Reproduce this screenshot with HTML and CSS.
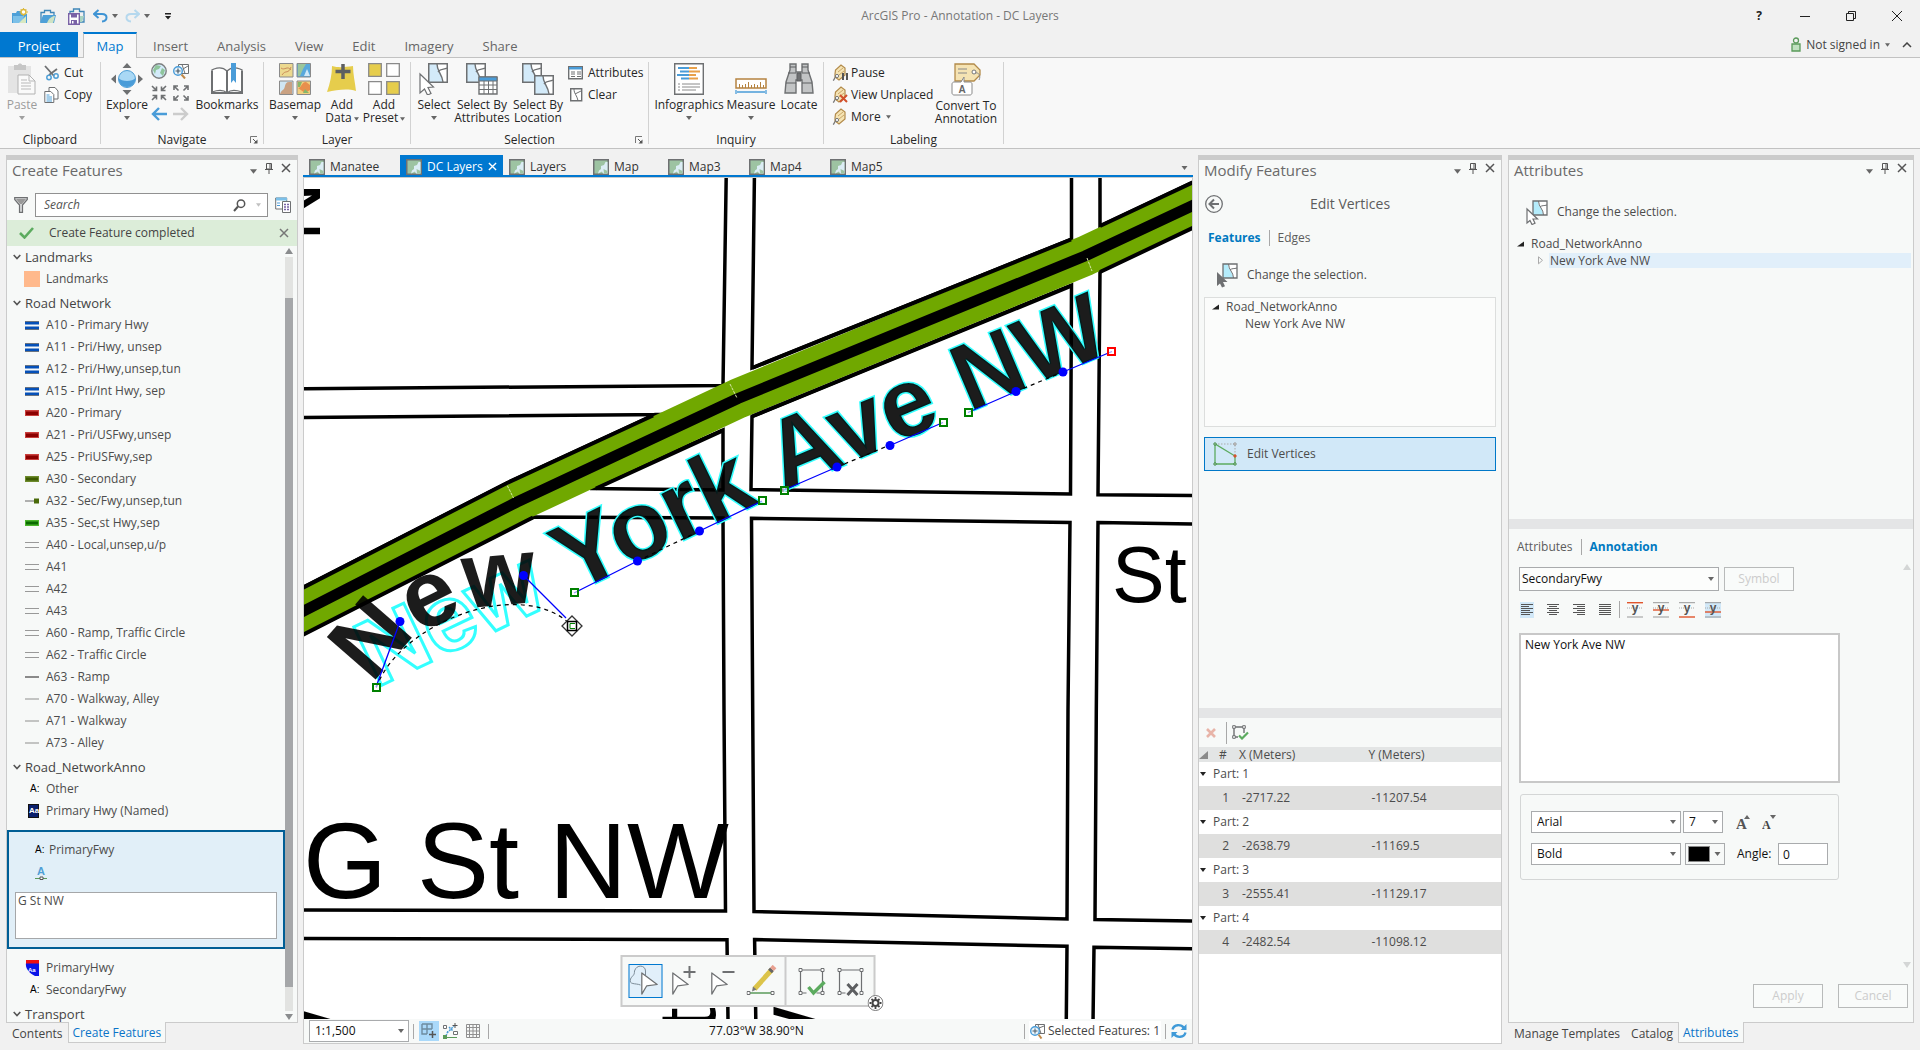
FILE: index.html
```html
<!DOCTYPE html>
<html lang="en">
<head>
<meta charset="utf-8">
<title>ArcGIS Pro - Annotation - DC Layers</title>
<link rel="stylesheet" href="styles.css">
</head>
<body>
<svg class="defs" aria-hidden="true">
  <symbol id="caret" viewBox="0 0 6 4"><path d="M0 0h6L3 4z" fill="#666"/></symbol>
  <symbol id="pin" viewBox="0 0 8 11"><path d="M1.500.5h5v5.500h-5zM5 .5v5M0 6.500h8M4 6.500V11" fill="none" stroke="#555"/></symbol>
  <symbol id="cross" viewBox="0 0 10 10"><path d="M1 1l8 8M9 1L1 9" fill="none" stroke="currentColor" stroke-width="1.500"/></symbol>
  <symbol id="chev" viewBox="0 0 8 6"><path d="M.7 1L4 4.500 7.300 1" fill="none" stroke="#555" stroke-width="1.600"/></symbol>
  <symbol id="launch" viewBox="0 0 8 8"><path d="M.5 7V.5H7" fill="none" stroke="#777"/><path d="M3 3l3 3" stroke="#555"/><path d="M7.500 3.500v4h-4z" fill="#555"/></symbol>
  <symbol id="mapdoc" viewBox="0 0 16 16"><path d="M.75.75h14.500v14.500H.75z" fill="#9dc3a2" stroke="#6e7072" stroke-width="1.500"/><path d="M14.500 3v11.500H10l-1-2-2 1-2 1 1-3 2-1.500V7l3-1 1.500-3z" fill="#dcedf5"/><path d="M10.500 10l4 2v2.500H11z" fill="#9dc3a2"/></symbol>
  <symbol id="expand" viewBox="0 0 7 5"><path d="M7 0v5H0z" fill="#222"/></symbol>
  <symbol id="roadblue" viewBox="0 0 14 9"><path d="M0 0h14v9H0z" fill="#6a7480"/><path d="M0 1h14v3H0zM0 5h14v3H0z" fill="#0550b8"/><path d="M0 3.500h14v2H0z" fill="#f7f9f8"/></symbol>
  <symbol id="roadred" viewBox="0 0 14 6"><path d="M0 0h14v6H0z" fill="#c9403d"/><path d="M1 1.500h12v3.500H1z" fill="#8b0000"/></symbol>
  <symbol id="roadolive" viewBox="0 0 14 6"><path d="M0 0h14v6H0z" fill="#6d8b2c"/><path d="M1 1.500h12v3H1z" fill="#3d5a00"/></symbol>
  <symbol id="roadtun" viewBox="0 0 14 6"><path d="M0 2.500h10v1H0z" fill="#666"/><path d="M9 .5h5v5H9z" fill="#4a6a0a"/></symbol>
  <symbol id="roadgreen" viewBox="0 0 14 6"><path d="M0 0h14v6H0z" fill="#4bb52d"/><path d="M1 1.500h12v3H1z" fill="#0a6a00"/></symbol>
  <symbol id="roadlocal" viewBox="0 0 14 6"><path d="M0 .5h14M0 5.500h14" stroke="#999"/></symbol>
  <symbol id="roadramp" viewBox="0 0 14 6"><path d="M0 3h14" stroke="#8a8a8a" stroke-width="2"/></symbol>
  <symbol id="roadwalk" viewBox="0 0 14 6"><path d="M0 3h14" stroke="#b2b2b2" stroke-width="1.500"/></symbol>
  <symbol id="parcel" viewBox="0 0 20 20"><path d="M.75.75h18.500v18.500H.75z" fill="#fff"/><path d="M1 1h8.500l1 6 2.500 4 2 8H1z" fill="#d3eaf9"/><path d="M9 1c0 8 5 9 6 18M10 9c3-4 6-2 9-4" fill="none" stroke="#6e7072" stroke-width="1.400"/><path d="M.75.75h18.500v18.500H.75z" fill="none" stroke="#6e7072" stroke-width="1.500"/></symbol>
  <symbol id="tag" viewBox="0 0 14 17"><path d="M3 10L3.500 6 9 1l4 3v7l-6 5-4-3z" fill="#f5e3b3" stroke="#b28a4a" stroke-width="1.200"/><path d="M6 8l5-4M7 11l5-4" stroke="#c9a768"/><circle cx="5" cy="12" r="1.600" fill="#fff" stroke="#777"/><path d="M1 16.500c2-1 1-3 3-4" fill="none" stroke="#777" stroke-width="1.200"/></symbol>
  <symbol id="arrowcur" viewBox="0 0 18 26"><path d="M1 1v22l5-8.500L17 13z" fill="#fff" stroke="#6e7072" stroke-width="1.300" stroke-linejoin="round"/></symbol>
  <symbol id="changesel" viewBox="0 0 22 25"><path d="M7 1h14v14H7z" fill="#fff"/><path d="M7 1h5c0 6 5 8 5 14H7z" fill="#b4ecfb"/><path d="M12.500 1c0 6 5 8 5 14M14 7c2-2 4-1 7-2" fill="none" stroke="#6e7072"/><path d="M7 1h14v14H7z" fill="none" stroke="#6e7072" stroke-width="1.300"/></symbol>
</svg>

<header class="titlebar">
  <div class="quick">
    <button class="qbtn" aria-label="New project"><svg width="16" height="16" viewBox="0 0 16 16"><path d="M0 5h4l1-2h4v3h6v9H0z" fill="#4ea0d8"/><path d="M1 8h11l-2 7H1z" fill="#7cc0e8"/><path d="M7 15l7-7v7z" fill="#d8e8c0"/><circle cx="11.500" cy="4" r="2.500" fill="#fff" stroke="#dcb93c" stroke-width="1.500"/><path d="M11.500 0v1M11.500 7v1M7.500 4h1M15 4h1M8.700 1.200l.8.800M14.300 1.200l-.8.800" stroke="#dcb93c"/></svg></button>
    <button class="qbtn" aria-label="Open project"><svg width="16" height="16" viewBox="0 0 16 16"><path d="M1 14V4.500h3.500V2.500h6v2H14V7" fill="none" stroke="#3f86b8" stroke-width="1.300"/><path d="M0 15l3-8h13l-2 8z" fill="#4ea0d8"/><path d="M7 15c2-5 5-7 8-7l-2 7z" fill="#cfe3c4"/></svg></button>
    <button class="qbtn qsave" aria-label="Save project"><svg width="17" height="17" viewBox="0 0 17 17"><path d="M2 5V3.500h3.500V1h6v2.500H16V14h-4" fill="none" stroke="#3f86b8" stroke-width="1.300"/><path d="M12 8h4l-2 6h-2z" fill="#a8d3c0"/><path d="M.7 5.700h10.600v10.600H.7z" fill="#fff" stroke="#7a62a6" stroke-width="1.400"/><path d="M3 6h6v3.500H3zM3 12h6v4H3z" fill="#7a62a6"/><path d="M4 13h1.500v2.500H4z" fill="#fff"/></svg></button>
    <button class="qbtn qarrow" aria-label="Undo"><svg width="15" height="14" viewBox="0 0 15 14"><path d="M5.500 1L1 5l4.500 4M1.500 5H9c6 0 6 7 0 7.500" fill="none" stroke="#3f94d4" stroke-width="2"/></svg></button>
    <svg class="qcaret" width="6" height="4"><use href="#caret"/></svg>
    <button class="qbtn qarrow" aria-label="Redo"><svg width="15" height="14" viewBox="0 0 15 14"><path d="M9.500 1L14 5 9.500 9M13.500 5H6c-6 0-6 7 0 7.500" fill="none" stroke="#b5d8ee" stroke-width="2"/></svg></button>
    <svg class="qcaret" width="6" height="4"><use href="#caret"/></svg>
    <svg class="qmore" width="6" height="7" viewBox="0 0 6 7"><path d="M0 0h6v1.500H0zM0 3h6L3 6.500z" fill="#222"/></svg>
  </div>
  <h1 class="apptitle">ArcGIS Pro - Annotation - DC Layers</h1>
  <div class="winbtns">
    <button aria-label="Help"><b>?</b></button>
    <button aria-label="Minimize"><svg width="10" height="10"><path d="M0 5.500h10" stroke="#222"/></svg></button>
    <button aria-label="Restore"><svg width="10" height="10"><path d="M.5 2.500h7v7h-7zM2.500 2.500v-2h7v7h-2" fill="none" stroke="#222"/></svg></button>
    <button aria-label="Close"><svg width="10" height="10"><path d="M0 0l10 10M10 0L0 10" stroke="#222"/></svg></button>
  </div>
</header>

<nav class="ribtabs">
  <a href="#" class="rt project">Project</a>
  <a href="#" class="rt current">Map</a>
  <a href="#" class="rt">Insert</a>
  <a href="#" class="rt">Analysis</a>
  <a href="#" class="rt">View</a>
  <a href="#" class="rt">Edit</a>
  <a href="#" class="rt">Imagery</a>
  <a href="#" class="rt">Share</a>
  <button class="signin"><svg width="10" height="15" viewBox="0 0 10 15"><circle cx="5" cy="3.500" r="2.500" fill="none" stroke="#5a9a5a" stroke-width="1.300"/><path d="M1 14V7h8v7z" fill="#bfe0bf" stroke="#5a9a5a" stroke-width="1.300"/></svg>Not signed in <svg width="5" height="4"><use href="#caret"/></svg></button>
  <button class="collapse" aria-label="Collapse ribbon"><svg width="10" height="6"><path d="M1 5l4-4 4 4" fill="none" stroke="#444" stroke-width="1.500"/></svg></button>
</nav>

<section class="ribbon">
  <div class="grp g-clip">
    <div class="tools">
      <button class="big w44 off"><svg width="30" height="32" viewBox="0 0 30 32"><path d="M1 3h23v27H1z" fill="#e4e4e4"/><path d="M7 2h4c0-2 4-2 4 0h4v5H7z" fill="#c6c6c6"/><path d="M11 12h11l6 6v13H11z" fill="#fafafa" stroke="#b2b2b2"/><path d="M22 12v6h6M14 17h6M14 20h10M14 23h10M14 26h10" fill="none" stroke="#b8b8b8"/></svg><span>Paste</span><svg width="6" height="4"><use href="#caret"/></svg></button>
      <div class="stack">
        <button class="small"><svg width="15" height="16" viewBox="0 0 15 16"><path d="M1 1l9 10M5 10L13 4" stroke="#6e7072" stroke-width="1.800"/><circle cx="5" cy="12.500" r="2.200" fill="none" stroke="#4f9fd6" stroke-width="1.500"/><circle cx="12" cy="11" r="2.200" fill="none" stroke="#4f9fd6" stroke-width="1.500"/></svg>Cut</button>
        <button class="small"><svg width="15" height="16" viewBox="0 0 15 16"><path d="M5 .5h6L14 4v8H5z" fill="#fff" stroke="#6e7072"/><path d="M.8 4.500h6l3 3v8h-9z" fill="#fff" stroke="#6e7072"/><path d="M2.500 8h3M2.500 10h5.500M2.500 12h5.500M2.500 14h5.500" stroke="#4f9fd6"/></svg>Copy</button>
      </div>
    </div>
    <div class="glabel">Clipboard</div>
  </div>
  <div class="grp g-nav">
    <div class="tools">
      <button class="big w48"><svg width="32" height="32" viewBox="0 0 32 32"><path d="M16 0l4.500 5h-9zM16 32l4.500-5h-9zM0 16l5-4.500v9zM32 16l-5-4.500v9z" fill="#6e7072"/><circle cx="16" cy="16" r="8.500" fill="#a9d8f5" stroke="#4f9fd6"/><path d="M7.500 15c3 4 14 4 17 0 0 12-17 12-17 0z" fill="#4a9cd8"/></svg><span>Explore</span><svg width="6" height="4"><use href="#caret"/></svg></button>
      <div class="navgrid">
        <button aria-label="Full extent"><svg width="16" height="16"><circle cx="8" cy="8" r="7.200" fill="#d3eaf9" stroke="#7d7f80" stroke-width="1.400"/><path d="M5 2l5 1-2 3-3 1-1 4-2-4zM11 5l3 2-2 6-3-3z" fill="#8fc59c"/></svg></button>
        <button aria-label="Zoom to selection"><svg width="16" height="16"><path d="M5.500 1.500h10v9h-10z" fill="#fff" stroke="#6e7072"/><path d="M9 1.500l3 9M10 6l5-3" stroke="#6e7072"/><circle cx="5" cy="8" r="4.300" fill="#e8f4fc" stroke="#4a9cd8" stroke-width="1.400"/><path d="M2.500 8h5M5 5.500v5" stroke="#4a5a66" stroke-width="1.200"/><path d="M8.500 11.500l3.500 4" stroke="#c08a4a" stroke-width="2"/></svg></button>
        <button aria-label="Fixed zoom in"><svg width="16" height="16" fill="none" stroke="#6e7072" stroke-width="1.600"><path d="M1 1l4.500 4.500M5.500 1.500v4h-4M15 1l-4.500 4.500M10.500 1.500v4h4M1 15l4.500-4.500M5.500 14.500v-4h-4M15 15l-4.500-4.500M10.500 14.500v-4h4"/></svg></button>
        <button aria-label="Fixed zoom out"><svg width="16" height="16" fill="none" stroke="#6e7072" stroke-width="1.600"><path d="M1 1l4.500 4.500M1 5V1h4M15 1l-4.500 4.500M15 5V1h-4M1 15l4.500-4.500M1 11v4h4M15 15l-4.500-4.500M15 11v4h-4"/></svg></button>
        <button aria-label="Previous extent"><svg width="16" height="14"><path d="M8 1L2 7l6 6M2 7h14" fill="none" stroke="#4a9cd8" stroke-width="2.400"/></svg></button>
        <button aria-label="Next extent"><svg width="16" height="14"><path d="M8 1l6 6-6 6M14 7H0" fill="none" stroke="#ccc" stroke-width="2.400"/></svg></button>
      </div>
      <button class="big w68 marks"><svg width="32" height="32" viewBox="0 0 32 32"><path d="M1 29V7l2-1C8 4 13 5 16 8c3-3 8-4 13-2l2 1v22c-6-2-12-2-15 1-3-3-9-3-15-1z" fill="#fff" stroke="#6e7072" stroke-width="1.300"/><path d="M1 8v22h30V8M16 8v21" fill="none" stroke="#6e7072" stroke-width="2"/><path d="M20 0h5v20l-2.500-3L20 20z" fill="#4a9cd8"/></svg><span>Bookmarks</span><svg width="6" height="4"><use href="#caret"/></svg></button>
    </div>
    <div class="glabel">Navigate<svg class="launch" width="8" height="8"><use href="#launch"/></svg></div>
  </div>
  <div class="grp g-layer">
    <div class="tools">
      <button class="big w54"><svg width="32" height="32" viewBox="0 0 32 32"><g stroke="#8a8a8a"><path d="M.5.5h13.500v13.500H.5z" fill="#ecd98f"/><path d="M18 .5h13.500v13.500H18z" fill="#58a8dc"/><path d="M.5 18h13.500v13.500H.5z" fill="#cfe6f3"/><path d="M18 18h13.500v13.500H18z" fill="#f2cf7f"/></g><path d="M2 5c4 3 6-3 10 2M3 12c4-6 6 0 9-8" fill="none" stroke="#c98c5a"/><path d="M19 1h8l-3 5-3 7h-2z" fill="#9ac69b"/><path d="M28 6l3 7h-6z" fill="#cfe8f8"/><path d="M1 31c2-5 4-3 5-8s4-4 7-4v12z" fill="#c9a182"/><path d="M19 25c4 0 3-6 8-6l4 3v5l-5 3z" fill="#e88f4d"/><path d="M19 19h4l-2 5h-2zM26 26l4 4h-6z" fill="#87b86b"/></svg><span>Basemap</span><svg width="6" height="4"><use href="#caret"/></svg></button>
      <button class="big w40"><svg width="30" height="32" viewBox="0 0 30 32"><path d="M5 3c7 2 13 1 21 0 0 8 2 16 3 25-9-3-19-1-29 1C3 20 5 12 5 3z" fill="#e6cd4c"/><path d="M16 1v15M8.500 8.500h15" stroke="#5d5f61" stroke-width="3.500"/></svg><span>Add<br>Data<svg width="5" height="4"><use href="#caret"/></svg></span></button>
      <button class="big w44"><svg width="32" height="32" viewBox="0 0 32 32"><path d="M.7.7h12.600v12.600H.7zM18.700 18.700h12.600v12.600H18.700z" fill="#e6cd4c" stroke="#8a8a8a" stroke-width="1.300"/><path d="M18.700.7h12.600v12.600H18.700zM.7 18.700h12.600v12.600H.7z" fill="#fff" stroke="#8a8a8a" stroke-width="1.300"/></svg><span>Add<br>Preset<svg width="5" height="4"><use href="#caret"/></svg></span></button>
    </div>
    <div class="glabel">Layer</div>
  </div>
  <div class="grp g-sel">
    <div class="tools">
      <button class="big w40"><svg width="30" height="32" viewBox="0 0 30 32"><svg x="9" y="0" width="20" height="20"><use href="#parcel"/></svg><path d="M1 11v19l4.500-4 3 6 3.500-1.500-3-6 5.500-.5z" fill="#fff" stroke="#6e7072" stroke-width="1.200"/></svg><span>Select</span><svg width="6" height="4"><use href="#caret"/></svg></button>
      <button class="big w56"><svg width="32" height="32" viewBox="0 0 32 32"><svg x="0" y="0" width="20" height="20"><use href="#parcel"/></svg><path d="M13 14h18v17H13z" fill="#fff" stroke="#6e7072" stroke-width="1.400"/><path d="M13 14h18v4H13z" fill="#4a9cd8" stroke="#6e7072"/><path d="M13 22h18M13 26.500h18M18 18v13M22.500 18v13M27 18v13" stroke="#6e7072"/></svg><span>Select By<br>Attributes</span></button>
      <button class="big w56"><svg width="32" height="32" viewBox="0 0 32 32"><svg x="0" y="0" width="20" height="20"><use href="#parcel"/></svg><svg x="12" y="12" width="20" height="20"><use href="#parcel"/></svg></svg><span>Select By<br>Location</span></button>
      <div class="stack">
        <button class="small"><svg width="15" height="14"><path d="M.7.700h13.600v12H.7z" fill="#fff" stroke="#6e7072" stroke-width="1.400"/><path d="M1 1h13v2.500H1z" fill="#4a9cd8"/><path d="M3 6h4M9 6h4M3 8h4M9 8h4M3 10.500h4M9 10.500h4" stroke="#6e7072"/></svg>Attributes</button>
        <button class="small"><svg width="15" height="14"><path d="M2.700.700h11v12h-11z" fill="#fff" stroke="#6e7072" stroke-width="1.400"/><path d="M6 1c0 5 3 6 4 12M7 6l6-3" fill="none" stroke="#6e7072"/></svg>Clear</button>
      </div>
    </div>
    <div class="glabel">Selection<svg class="launch" width="8" height="8"><use href="#launch"/></svg></div>
  </div>
  <div class="grp g-inq">
    <div class="tools">
      <button class="big w68"><svg width="30" height="32" viewBox="0 0 30 32"><path d="M.7.700h28.600v30.600H.7z" fill="#fff" stroke="#6e7072" stroke-width="1.400"/><path d="M4 5h11M6 8.500h9M3 12h12M7 15.500h8" stroke="#4a9cd8" stroke-width="2"/><path d="M15 5h8M15 8.500h11M15 12h7M15 15.500h9" stroke="#e8a04a" stroke-width="2"/><path d="M4 21h2M8 21h18M4 24h2M8 24h18M4 27h2M8 27h14" stroke="#8a8a8a"/></svg><span>Infographics</span><svg width="6" height="4"><use href="#caret"/></svg></button>
      <button class="big w52"><svg width="32" height="32" viewBox="0 0 32 32"><path d="M1 16h30v9H1z" fill="#fff" stroke="#b58340" stroke-width="1.500"/><path d="M4.500 25v-4M7.500 25v-3M10.500 25v-4M13.500 25v-6M16.500 25v-3M19.500 25v-4M22.500 25v-3M25.500 25v-6M28.500 25v-3" stroke="#b58340"/><path d="M1 27v4M31 27v4M2 29h28" stroke="#4a9cd8" stroke-width="1.300"/></svg><span>Measure</span><svg width="6" height="4"><use href="#caret"/></svg></button>
      <button class="big w40"><svg width="30" height="32" viewBox="0 0 30 32"><path d="M6 1h6v8h6V1h6v6l4 12 1 11H18V17h-6v13H1l1-11L6 7z" fill="#c2c4c5" stroke="#6e7072" stroke-width="1.400"/><path d="M6 4h6M18 4h6M4 10h8M18 10h8M2 20h10M18 20h10M13 10h4v8h-4z" stroke="#5d5f61" fill="#6e7072"/></svg><span>Locate</span></button>
    </div>
    <div class="glabel">Inquiry</div>
  </div>
  <div class="grp g-lab">
    <div class="tools">
      <div class="stack">
        <button class="small"><svg width="17" height="17"><svg width="14" height="17"><use href="#tag"/></svg><path d="M11 9v7M15 9v7" stroke="#555" stroke-width="2"/></svg>Pause</button>
        <button class="small"><svg width="17" height="17"><svg width="14" height="17"><use href="#tag"/></svg><path d="M8 9l7 7M15 9l-7 7" stroke="#d1502a" stroke-width="2"/></svg>View Unplaced</button>
        <button class="small"><svg width="17" height="17"><svg width="14" height="17"><use href="#tag"/></svg></svg>More&nbsp;<svg width="5" height="4"><use href="#caret"/></svg></button>
      </div>
      <button class="big w68"><svg width="30" height="33" viewBox="0 0 30 33"><path d="M4 1h19l6 6v5l-6 6H4z" fill="#f5e3b3" stroke="#b28a4a" stroke-width="1.300"/><circle cx="23" cy="9" r="2" fill="#fff" stroke="#777"/><path d="M24 10c4-1 6 3 4 7M7 6h9M7 10h9" fill="none" stroke="#888"/><path d="M3 19h7l3-5v5h6c1 0 2 1 2 2v9c0 1-1 2-2 2H3c-1 0-2-1-2-2v-9c0-1 1-2 2-2z" fill="#fff" stroke="#8a8a8a"/><text x="11" y="30" text-anchor="middle" class="icoA">A</text></svg><span>Convert To<br>Annotation</span></button>
    </div>
    <div class="glabel">Labeling</div>
  </div>
</section>

<main class="dock">
  <!-- Create Features pane -->
  <aside class="col">
    <section class="pane">
      <header class="phead"><h2>Create Features</h2><svg width="7" height="5"><use href="#caret"/></svg><svg width="8" height="11"><use href="#pin"/></svg><svg width="10" height="10"><use href="#cross"/></svg></header>
      <div class="searchrow">
        <svg width="14" height="16" viewBox="0 0 14 16"><path d="M.7.700h12.600v1.800L8.500 8v7.300h-3V8L.7 2.500z" fill="#d8dadb" stroke="#6e7072" stroke-width="1.200"/><path d="M2 2h10L8 7H6z" fill="#999"/></svg>
        <label class="searchbox"><input type="text" placeholder="Search" aria-label="Search"><svg width="13" height="13" viewBox="0 0 13 13"><circle cx="8" cy="4.700" r="3.700" fill="none" stroke="#555" stroke-width="1.500"/><path d="M5 7.500L1 12" stroke="#555" stroke-width="2"/></svg><svg class="dim" width="5" height="4"><use href="#caret"/></svg></label>
        <svg width="16" height="16" viewBox="0 0 16 16"><path d="M.7 1h11v11H.7z" fill="#fff" stroke="#6e7072"/><path d="M1 .5h11v3H1z" fill="#7cc0e8"/><path d="M2 6h3M2 8.500h3" stroke="#4a9cd8"/><path d="M7.500 4.500h8v11h-8z" fill="#fff" stroke="#6e7072"/><path d="M9 7.500h2M9 10h2M9 12.500h2M12 7.500h2M12 10h2M12 12.500h2" stroke="#7a62a6" stroke-width="1.300"/></svg>
      </div>
      <div class="notice"><svg width="15" height="12" viewBox="0 0 15 12"><path d="M1 6l4.500 4.500L14 1" fill="none" stroke="#5cab5f" stroke-width="2.600"/></svg><span>Create Feature completed</span><svg width="10" height="10"><use href="#cross"/></svg></div>
      <div class="listwrap">
        <ul class="templates">
          <li class="head"><svg width="8" height="6"><use href="#chev"/></svg>Landmarks</li>
          <li><i class="sw"></i>Landmarks</li>
          <li class="head"><svg width="8" height="6"><use href="#chev"/></svg>Road Network</li>
          <li><svg width="14" height="9"><use href="#roadblue"/></svg>A10 - Primary Hwy</li>
          <li><svg width="14" height="9"><use href="#roadblue"/></svg>A11 - Pri/Hwy, unsep</li>
          <li><svg width="14" height="9"><use href="#roadblue"/></svg>A12 - Pri/Hwy,unsep,tun</li>
          <li><svg width="14" height="9"><use href="#roadblue"/></svg>A15 - Pri/Int Hwy, sep</li>
          <li><svg width="14" height="6"><use href="#roadred"/></svg>A20 - Primary</li>
          <li><svg width="14" height="6"><use href="#roadred"/></svg>A21 - Pri/USFwy,unsep</li>
          <li><svg width="14" height="6"><use href="#roadred"/></svg>A25 - PriUSFwy,sep</li>
          <li><svg width="14" height="6"><use href="#roadolive"/></svg>A30 - Secondary</li>
          <li><svg width="14" height="6"><use href="#roadtun"/></svg>A32 - Sec/Fwy,unsep,tun</li>
          <li><svg width="14" height="6"><use href="#roadgreen"/></svg>A35 - Sec,st Hwy,sep</li>
          <li><svg width="14" height="6"><use href="#roadlocal"/></svg>A40 - Local,unsep,u/p</li>
          <li><svg width="14" height="6"><use href="#roadlocal"/></svg>A41</li>
          <li><svg width="14" height="6"><use href="#roadlocal"/></svg>A42</li>
          <li><svg width="14" height="6"><use href="#roadlocal"/></svg>A43</li>
          <li><svg width="14" height="6"><use href="#roadlocal"/></svg>A60 - Ramp, Traffic Circle</li>
          <li><svg width="14" height="6"><use href="#roadlocal"/></svg>A62 - Traffic Circle</li>
          <li><svg width="14" height="6"><use href="#roadramp"/></svg>A63 - Ramp</li>
          <li><svg width="14" height="6"><use href="#roadwalk"/></svg>A70 - Walkway, Alley</li>
          <li><svg width="14" height="6"><use href="#roadwalk"/></svg>A71 - Walkway</li>
          <li><svg width="14" height="6"><use href="#roadwalk"/></svg>A73 - Alley</li>
          <li class="head"><svg width="8" height="6"><use href="#chev"/></svg>Road_NetworkAnno</li>
          <li><span class="aa">A:</span>Other</li>
          <li><span class="aa navy">Aa</span>Primary Hwy (Named)</li>
          <li class="active">
            <div class="acthead"><span class="aa">A:</span>PrimaryFwy</div>
            <button class="straight" aria-label="Straight annotation"><svg width="12" height="14" viewBox="0 0 12 14"><text x="6" y="9" text-anchor="middle" class="icoBlue">A</text><path d="M0 12.500h12" stroke="#5a9a5a"/><path d="M5 11h3v2.500H5z" fill="#fff" stroke="#555"/></svg></button>
            <textarea aria-label="Annotation text">G St NW</textarea>
          </li>
          <li><svg width="14" height="16" viewBox="0 0 14 16"><path d="M1 0h13v16h-4C4 13 0 8 1 3z" fill="#0a14e8"/><path d="M1 0h13v3.500H1z" fill="#f01010"/><text x="3" y="12" class="icoW">Aa</text></svg>PrimaryHwy</li>
          <li><span class="aa">A:</span>SecondaryFwy</li>
          <li class="head"><svg width="8" height="6"><use href="#chev"/></svg>Transport</li>
        </ul>
        <div class="sbar"><svg width="8" height="6"><path d="M4 0l4 6H0z" fill="#8a8c8e"/></svg><div class="track"><div class="thumb"></div></div><svg width="8" height="6"><path d="M0 0h8L4 6z" fill="#8a8c8e"/></svg></div>
      </div>
    </section>
    <nav class="ptabs"><a href="#">Contents</a><a href="#" class="on">Create Features</a></nav>
  </aside>

  <!-- Map view -->
  <section class="mapcol">
    <nav class="mtabs">
      <a href="#" class="m1"><svg width="16" height="16"><use href="#mapdoc"/></svg>Manatee</a>
      <a href="#" class="m2 on"><svg width="16" height="16"><use href="#mapdoc"/></svg>DC Layers<svg class="x" width="9" height="9" viewBox="0 0 10 10"><use href="#cross"/></svg></a>
      <a href="#" class="m3"><svg width="16" height="16"><use href="#mapdoc"/></svg>Layers</a>
      <a href="#" class="m4"><svg width="16" height="16"><use href="#mapdoc"/></svg>Map</a>
      <a href="#" class="m5"><svg width="16" height="16"><use href="#mapdoc"/></svg>Map3</a>
      <a href="#" class="m5"><svg width="16" height="16"><use href="#mapdoc"/></svg>Map4</a>
      <a href="#" class="m5"><svg width="16" height="16"><use href="#mapdoc"/></svg>Map5</a>
      <svg class="mmore" width="7" height="4"><use href="#caret"/></svg>
    </nav>
    <div class="mapframe">
      <div class="canvas">
        <svg class="map" role="img" aria-label="Street map">
          <g transform="translate(-304 -178)">
            <!-- city blocks -->
            <g fill="#fff" stroke="#000" stroke-width="3.500">
              <path d="M726.300 170L723 385.500 290 388.800V170z"/>
              <path d="M290 417.500L668 414.500 655 414.500 507 483 290 594z"/>
              <path d="M754.500 170L752 368 1071.500 239V170z"/>
              <path d="M1100 170V226L1200 179V170z"/>
              <path d="M290 641L527 520 533 517 723 518 724 710 725.500 911 290 910z"/>
              <path d="M590 488.600L723 490V430z"/>
              <path d="M752 416.500L1071.500 285 1070.500 494 751 489.500z"/>
              <path d="M1100 271.400L1200 224V495.700L1098 494.700z"/>
              <path d="M751.500 518.300L1070 522.500 1068 710 1067 919 754 911.500 752.700 710z"/>
              <path d="M1098 522.500L1200 524V921L1095 919.500 1096.300 710z"/>
              <path d="M290 938.500L727 939.700 729 1100H290z"/>
              <path d="M754.600 939.500L1067 946.300 1065.500 1100H757z"/>
              <path d="M1094 947.300L1200 949V1100H1092z"/>
            </g>
            <!-- New York Ave -->
            <g fill="none" stroke-linejoin="round">
              <path d="M290 618L517 502 738 398.500 1085 256 1210 197.500" stroke="#70a800" stroke-width="40"/>
              <path d="M290 618L517 502 738 398.500 1085 256 1210 197.500" stroke="#000" stroke-width="11"/>
              <path d="M505.500 482L513.500 498M730 384L737 398M1087 258L1092 271" stroke="#d6e8a8" stroke-dasharray="3 1"/>
            </g>
            <!-- curb line of New York Ave along each block -->
            <g fill="none" stroke="#000" stroke-width="4">
              <path d="M290 594.500L507 483 653 415.500M752 368L1071 239.500M1100 226L1200 179"/>
              <path d="M290 641.500L527 520.500 533 517.500M596 488.500L723 430.500M752 416.500L1071 286M1100 272L1200 224.500"/>
            </g>
            <!-- street names -->
            <g class="street">
              <text x="303" y="898" font-size="108">G St NW</text>
              <text x="1112" y="602" font-size="79">St</text>
              <text transform="translate(320 241) rotate(-90)" font-size="81">N</text>
              <text transform="translate(715 1084) rotate(-90)" font-size="81">St</text>
              <text transform="translate(830 1083) rotate(-90)" font-size="81">W</text>
              <text transform="translate(345 1083) rotate(-90)" font-size="81">W</text>
            </g>
            <!-- annotation being edited -->
            <path id="curve" d="M376.300 687.500C400.300 621.500 523.500 575.500 572 626" fill="none"/>
            <g class="anno">
              <text class="ghost" transform="translate(376 688) rotate(-25.500)">New</text>
              <text class="plain"><textPath href="#curve">New</textPath></text>
              <text class="wide" transform="translate(573 594) rotate(-26)">York</text>
              <text class="wide" transform="translate(783 491) rotate(-23)">Ave</text>
              <text transform="translate(969 412) rotate(-23)">NW</text>
            </g>
            <g fill="none" stroke="#000" stroke-width="1.200" stroke-dasharray="4 4">
              <path d="M376.300 687.500C400.300 621.500 523.500 575.500 572 626"/>
              <path d="M637.500 561L699.500 531M837 467L890 445M1016 391.500L1063 372"/>
            </g>
            <g stroke="#00f" stroke-width="1.300">
              <path d="M376 687L400 621.500M523.500 575.500L566 618M574 593L637.500 561M699.500 531L762 501M784 490L837 467M890 445.500L943 422.500M968 412.500L1016 391.500M1063 372L1112 351.500"/>
            </g>
            <g fill="#00f">
              <circle cx="400" cy="621.500" r="4.500"/><circle cx="523.500" cy="575.500" r="4.500"/><circle cx="637.500" cy="561" r="4.500"/><circle cx="699.500" cy="531" r="4.500"/><circle cx="837" cy="467" r="4.500"/><circle cx="890" cy="445.500" r="4.500"/><circle cx="1016" cy="391.500" r="4.500"/><circle cx="1063" cy="372" r="4.500"/>
            </g>
            <g fill="#fff" fill-opacity=".6" stroke="#008000" stroke-width="2">
              <path d="M373 684h7v7h-7zM571 589h7v7h-7zM759 497h7v7h-7zM781 487h7v7h-7zM940 419h7v7h-7zM965 409h7v7h-7z"/>
              <path d="M1108 348h7v7h-7z" stroke="#f00"/>
            </g>
            <path d="M572 616l10 10-10 10-10-10z" fill="#fff" stroke="#333" stroke-width="1.300"/><path d="M567.500 621.500h9v9h-9z" fill="#fff" stroke="#000" stroke-width="1.500"/><path d="M575 623.500h-5v5h5" fill="none" stroke="#008000"/>
          </g>
        </svg>
        <div class="edittools">
          <button class="et sel-on" aria-label="Select vertices"><svg width="32" height="32" viewBox="0 0 32 32"><path d="M11 20C6 18-1 20 1 14c2-4 4-3 4-8 2-7 11-6 11 0v4" fill="none" stroke="#7b8a96"/><svg x="11" y="7" width="18" height="25"><use href="#arrowcur"/></svg></svg></button>
          <button class="et" aria-label="Add vertices"><svg width="32" height="32" viewBox="0 0 32 32"><svg x="3" y="7" width="18" height="25"><use href="#arrowcur"/></svg><path d="M21 1v12M15 7h12" stroke="#6e7072" stroke-width="2"/></svg></button>
          <button class="et" aria-label="Remove vertices"><svg width="32" height="32" viewBox="0 0 32 32"><svg x="3" y="7" width="18" height="25"><use href="#arrowcur"/></svg><path d="M15 7h12" stroke="#6e7072" stroke-width="2"/></svg></button>
          <button class="et" aria-label="Edit line"><svg width="32" height="32" viewBox="0 0 32 32"><path d="M2 28h24" stroke="#5a9a5a" stroke-width="1.500"/><path d="M.5 26.500h3v3h-3zM24.500 26.500h3v3h-3z" fill="#fff" stroke="#6e7072"/><path d="M8 24L25 5" stroke="#dcc44a" stroke-width="5"/><path d="M23.500 6.500l2-2.200" stroke="#666" stroke-width="5"/><path d="M25.500 4.300L28 1.500" stroke="#e8a090" stroke-width="5"/><path d="M5.500 26.500l1-5 3.500 3z" fill="#777"/></svg></button>
          <span class="etsep"></span>
          <button class="et" aria-label="Finish"><svg width="32" height="32" viewBox="0 0 32 32"><path d="M5 5h22v23M5 5v23h6M21 28h6" fill="none" stroke="#6e7072" stroke-width="1.200"/><path d="M3.500 3.500h3v3h-3zM25.500 3.500h3v3h-3zM3.500 26.500h3v3h-3zM25.500 26.500h3v3h-3z" fill="#fff" stroke="#6e7072"/><path d="M13 22l5 6 11-11" fill="none" stroke="#5cab5f" stroke-width="3.500"/></svg></button>
          <button class="et" aria-label="Cancel edit"><svg width="32" height="32" viewBox="0 0 32 32"><path d="M5 5h22v23M5 5v23h6" fill="none" stroke="#6e7072" stroke-width="1.200"/><path d="M3.500 3.500h3v3h-3zM25.500 3.500h3v3h-3zM3.500 26.500h3v3h-3zM25.500 26.500h3v3h-3z" fill="#fff" stroke="#6e7072"/><path d="M13 19l10 11M23 19L13 30" stroke="#5d5f61" stroke-width="3"/></svg></button>
          <svg class="gear" width="16" height="16" viewBox="0 0 16 16"><circle cx="8" cy="8" r="7.500" fill="#fff" stroke="#777"/><circle cx="8" cy="8" r="3" fill="none" stroke="#444" stroke-width="2"/><path d="M8 2v2M8 12v2M2 8h2M12 8h2M4 4l1.300 1.300M12 12l-1.300-1.300M4 12l1.300-1.300M12 4l-1.300 1.300" stroke="#444" stroke-width="1.800"/></svg>
        </div>
      </div>
      <footer class="status">
        <span class="sel scale"><select aria-label="Scale"><option>1:1,500</option></select></span>
        <span class="bar"></span>
        <button class="sb on" aria-label="Snapping"><svg width="16" height="16"><path d="M1 1h10v5M6 1v10M1 1v10h5M1 6h10" fill="none" stroke="#6e8ca0" stroke-width="1.400"/><path d="M11.500 8v7M8 11.500h7" stroke="#555" stroke-width="1.500"/></svg></button>
        <button class="sb" aria-label="Constraints"><svg width="16" height="16"><path d="M.5 2.500h3v3h-3zM10.500 8.500h4v3h-4z" fill="#fff" stroke="#6e7072"/><path d="M4 10l7-7M3 13l2-5M6 4l4 4" stroke="#4a9cd8" stroke-width="1.500" stroke-dasharray="2 1"/><path d="M0 14.500h14" stroke="#5a9a5a"/><path d="M0 12h4v4H0z" fill="#5a9a5a"/><path d="M12 0v5M9.500 2.500h5" stroke="#555"/></svg></button>
        <button class="sb" aria-label="Grid"><svg width="14" height="14"><path d="M.5.500h13v13H.5zM3.500 0v14M7 0v14M10.500 0v14M0 3.500h14M0 7h14M0 10.500h14" fill="none" stroke="#909090"/></svg></button>
        <span class="bar"></span>
        <span class="coords">77.03°W 38.90°N</span>
        <span class="bar"></span>
        <button class="selcount"><svg width="16" height="16"><path d="M5.500 1.500h9v9h-9z" fill="#fff" stroke="#6e7072"/><path d="M8 1.500l3 9M9 5l5-2" stroke="#6e7072"/><circle cx="5" cy="8" r="4.300" fill="#e8f4fc" stroke="#4a9cd8" stroke-width="1.400"/><path d="M2.500 8h5M5 5.500v5" stroke="#4a5a66"/><path d="M8.500 11.500l3 4" stroke="#c08a4a" stroke-width="2"/></svg>Selected Features: 1</button>
        <span class="bar"></span>
        <button class="refresh" aria-label="Refresh"><svg width="16" height="16"><path d="M1.500 6.500C3 1 10 1 13 5M14.500 9.500C13 15 6 15 3 11" fill="none" stroke="#3f9ad8" stroke-width="2.400"/><path d="M15.500 1v6h-6zM.5 15V9h6z" fill="#3f9ad8"/></svg></button>
      </footer>
    </div>
  </section>

  <!-- Modify Features pane -->
  <aside class="col">
    <section class="pane">
      <header class="phead"><h2>Modify Features</h2><svg width="7" height="5"><use href="#caret"/></svg><svg width="8" height="11"><use href="#pin"/></svg><svg width="10" height="10"><use href="#cross"/></svg></header>
      <div class="toolhead"><button aria-label="Back"><svg width="18" height="18"><circle cx="9" cy="9" r="8.300" fill="none" stroke="#6e7072" stroke-width="1.300"/><path d="M9 4.500L4.500 9 9 13.500M5 9h9" fill="none" stroke="#6e7072" stroke-width="2"/></svg></button><h3>Edit Vertices</h3></div>
      <nav class="subtabs"><a href="#" class="on">Features</a><a href="#">Edges</a></nav>
      <button class="chsel"><svg width="22" height="25"><use href="#changesel"/><path d="M1 9v14l3-2.500 2 4 3-1.200-2-4.300h4.500z" fill="#6e7072"/></svg>Change the selection.</button>
      <div class="treebox">
        <div class="tr"><svg width="7" height="6"><use href="#expand"/></svg>Road_NetworkAnno</div>
        <div class="tr sub">New York Ave NW</div>
      </div>
      <button class="editv"><svg width="24" height="24" viewBox="0 0 24 24"><path d="M2 2h20v12" fill="none" stroke="#aaa" stroke-dasharray="1.500 1.500"/><path d="M2 2v20h20v-8z" fill="none" stroke="#5cab5f" stroke-width="1.300"/><path d="M1 1h2v2H1zM1 21h2v2H1zM21 21h2v2h-2z" fill="#fff" stroke="#3f8a43"/><path d="M21 1h2v2h-2z" fill="#fff" stroke="#999"/><path d="M21 13h2v2h-2z" fill="#e8623a" stroke="#d1502a"/></svg>Edit Vertices</button>
      <div class="split vsplit"></div>
      <div class="vtools"><button aria-label="Delete"><svg width="10" height="10"><path d="M1 1l8 8M9 1L1 9" stroke="#e8b4a8" stroke-width="2.600"/></svg></button><span class="bar"></span><button aria-label="Finish"><svg width="17" height="15" viewBox="0 0 17 15"><path d="M2 2h10v6M2 2v10h4" fill="none" stroke="#6e7072" stroke-width="1.400"/><path d="M.7.700h2.600v2.600H.7zM10.700.700h2.600v2.600h-2.600zM.7 10.700h2.600v2.600H.7z" fill="#fff" stroke="#6e7072"/><path d="M7 10.500l3 3 6-6" fill="none" stroke="#5cab5f" stroke-width="2.200"/></svg></button></div>
      <table class="verts">
        <thead><tr><th class="c0"><svg width="9" height="8"><path d="M9 0v8H0z" fill="#8a8a8a"/></svg></th><th class="c1">#</th><th>X (Meters)</th><th>Y (Meters)</th></tr></thead>
        <tbody>
          <tr class="part"><td><svg width="6" height="4"><path d="M0 0h6L3 4z" fill="#222"/></svg></td><td colspan="3">Part: 1</td></tr>
          <tr><td></td><td class="n">1</td><td>-2717.22</td><td>-11207.54</td></tr>
          <tr class="part"><td><svg width="6" height="4"><path d="M0 0h6L3 4z" fill="#222"/></svg></td><td colspan="3">Part: 2</td></tr>
          <tr><td></td><td class="n">2</td><td>-2638.79</td><td>-11169.5</td></tr>
          <tr class="part"><td><svg width="6" height="4"><path d="M0 0h6L3 4z" fill="#222"/></svg></td><td colspan="3">Part: 3</td></tr>
          <tr><td></td><td class="n">3</td><td>-2555.41</td><td>-11129.17</td></tr>
          <tr class="part"><td><svg width="6" height="4"><path d="M0 0h6L3 4z" fill="#222"/></svg></td><td colspan="3">Part: 4</td></tr>
          <tr><td></td><td class="n">4</td><td>-2482.54</td><td>-11098.12</td></tr>
        </tbody>
      </table>
      <div class="vrest"></div>
    </section>
  </aside>

  <!-- Attributes pane -->
  <aside class="col">
    <section class="pane">
      <header class="phead"><h2>Attributes</h2><svg width="7" height="5"><use href="#caret"/></svg><svg width="8" height="11"><use href="#pin"/></svg><svg width="10" height="10"><use href="#cross"/></svg></header>
      <button class="chsel top"><svg width="22" height="25"><use href="#changesel"/><path d="M1 9v14l3-2.500 2 4 3-1.200-2-4.300h4.500z" fill="#fff" stroke="#6e7072" stroke-width="1.200"/></svg>Change the selection.</button>
      <div class="tree">
        <div class="tr"><svg width="7" height="6"><use href="#expand"/></svg>Road_NetworkAnno</div>
        <div class="tr leaf"><svg width="5" height="9"><path d="M.5.800v7L4.500 4.300z" fill="none" stroke="#aaa"/></svg><span>New York Ave NW</span></div>
      </div>
      <div class="split asplit"></div>
      <nav class="subtabs low"><a href="#">Attributes</a><a href="#" class="on">Annotation</a></nav>
      <div class="annoedit">
        <form class="form">
          <div class="row r1"><span class="sel sym"><select aria-label="Symbol"><option>SecondaryFwy</option></select></span><button type="button" class="btn" disabled>Symbol</button></div>
          <div class="row r2">
            <button type="button" class="ab on" aria-label="Align left"><svg width="14" height="15"><path d="M1 2.500h12M1 4.500h8M1 6.500h12M1 8.500h9M1 10.500h12M1 12.500h9" stroke="#555"/></svg></button>
            <button type="button" class="ab" aria-label="Align center"><svg width="14" height="15"><path d="M1 2.500h12M3 4.500h8M1 6.500h12M3 8.500h8M1 10.500h12M3 12.500h8" stroke="#555"/></svg></button>
            <button type="button" class="ab" aria-label="Align right"><svg width="14" height="15"><path d="M1 2.500h12M5 4.500h8M1 6.500h12M5 8.500h8M1 10.500h12M5 12.500h8" stroke="#555"/></svg></button>
            <button type="button" class="ab" aria-label="Justify"><svg width="14" height="15"><path d="M1 2.500h12M1 4.500h12M1 6.500h12M1 8.500h12M1 10.500h12M1 12.500h12" stroke="#555"/></svg></button>
            <span class="bar"></span>
            <button type="button" class="vb" aria-label="Top"><svg width="16" height="16"><path d="M0 .700h16" stroke="#e0552c" stroke-width="1.400"/><path d="M0 6h16" stroke="#aaa" stroke-dasharray="1 1"/><path d="M0 15h16" stroke="#999"/><text x="8" y="10" text-anchor="middle" class="icoY">y</text></svg></button>
            <button type="button" class="vb" aria-label="Center"><svg width="16" height="16"><path d="M0 .700h16M0 15h16" stroke="#999"/><path d="M0 6h16" stroke="#aaa" stroke-dasharray="1 1"/><path d="M0 8h16" stroke="#e0552c" stroke-width="1.400"/><text x="8" y="10" text-anchor="middle" class="icoY">y</text></svg></button>
            <button type="button" class="vb" aria-label="Bottom"><svg width="16" height="16"><path d="M0 .700h16" stroke="#999"/><path d="M0 6h16" stroke="#aaa" stroke-dasharray="1 1"/><path d="M0 15h16" stroke="#e0552c" stroke-width="1.400"/><text x="8" y="10" text-anchor="middle" class="icoY">y</text></svg></button>
            <button type="button" class="vb on" aria-label="Baseline"><svg width="16" height="16"><path d="M0 .700h16M0 15h16" stroke="#999"/><path d="M0 6h16" stroke="#aaa" stroke-dasharray="1 1"/><path d="M0 10h16" stroke="#e0552c" stroke-width="1.400"/><text x="8" y="10" text-anchor="middle" class="icoY">y</text></svg></button>
          </div>
          <textarea class="annotext" aria-label="Text">New York Ave NW</textarea>
          <div class="fontbox">
            <div class="row"><span class="sel fam"><select aria-label="Font"><option>Arial</option></select></span><span class="sel size"><select aria-label="Size"><option>7</option></select></span><button type="button" class="fz first" aria-label="Grow font"><svg width="14" height="14"><text x="0" y="14" class="icoBig">A</text><path d="M8 4l3-4 3 4z" fill="#666"/></svg></button><button type="button" class="fz" aria-label="Shrink font"><svg width="14" height="14"><text x="0" y="14" class="icoSm">A</text><path d="M8 0h6l-3 4z" fill="#666"/></svg></button></div>
            <div class="row"><span class="sel fam"><select aria-label="Style"><option>Bold</option></select></span><button type="button" class="color" aria-label="Color"><i></i><svg width="7" height="4"><use href="#caret"/></svg></button><label for="angle">Angle:</label><input id="angle" type="text" value="0"></div>
          </div>
        </form>
        <div class="ghostbar"><svg width="8" height="6"><path d="M4 0l4 6H0z" fill="#d4d6d6"/></svg><svg width="8" height="6"><path d="M0 0h8L4 6z" fill="#d4d6d6"/></svg></div>
      </div>
      <div class="actions"><button class="btn" disabled>Apply</button><button class="btn" disabled>Cancel</button></div>
    </section>
    <nav class="ptabs"><a href="#">Manage Templates</a><a href="#">Catalog</a><a href="#" class="on">Attributes</a></nav>
  </aside>
</main>
</body>
</html>
```
FILE: styles.css
```css
* { box-sizing: border-box; }
body { margin: 0; min-height: 100vh; display: flex; flex-direction: column; background: #f1f1f1; color: #4c4c4c; font: 12px/16px "Open Sans", "Noto Sans", sans-serif; overflow: hidden; }
button, input, select, textarea { font: inherit; color: inherit; margin: 0; padding: 0; border: 0; background: none; border-radius: 0; }
a { color: inherit; text-decoration: none; }
h1, h2, h3 { margin: 0; font-weight: 400; }
svg { display: block; flex: none; }
.defs { position: absolute; width: 0; height: 0; }
.bar { width: 1px; background: #a8a8a8; flex: none; }

/* title bar */
.titlebar { display: grid; grid-template-columns: 1fr auto 1fr; align-items: center; height: 32px; }
.quick { display: flex; align-items: center; padding-left: 12px; }
.qbtn { margin-right: 12px; }
.qbtn.qsave { margin-right: 8px; }
.qbtn.qarrow { margin-right: 4px; }
.quick .qcaret { margin-right: 7px; }
.quick .qmore { margin-left: 8px; }
.apptitle { font-size: 12px; color: #777; }
.winbtns { display: flex; justify-content: flex-end; color: #222; }
.winbtns button { width: 46px; height: 32px; display: grid; place-items: center; }

/* ribbon tabs */
.ribtabs { display: flex; height: 26px; border-bottom: 1px solid #c2c2c2; font-size: 13px; color: #666; }
.rt { display: grid; place-items: center; padding: 2px 14px 0; height: 25px; margin-right: 1px; }
.rt.project { width: 78px; background: #0078d0; color: #fff; margin-right: 5px; }
.rt.current { width: 54px; height: 26px; background: #f8f8f8; color: #0078d0; border: 1px solid #c2c2c2; border-top: 2px solid #0078d0; border-bottom: 0; margin-right: 2px; padding: 0; }
.signin { margin-left: auto; display: flex; align-items: center; gap: 5px; font-size: 12px; color: #444; }
.collapse { padding: 0 8px 0 12px; }

/* ribbon */
.ribbon { display: flex; height: 91px; background: #f8f8f8; border-bottom: 1px solid #c2c2c2; padding: 4px 0; color: #262626; line-height: 13px; }
.grp { display: flex; flex-direction: column; justify-content: space-between; border-right: 1px solid #d2d2d2; }
.tools { display: flex; align-items: flex-start; padding-top: 1px; }
.g-clip { width: 101px; }
.g-nav { width: 163px; }
.g-layer { width: 147px; }
.g-sel { width: 238px; }
.g-inq { width: 175px; }
.g-lab { width: 180px; }
.glabel { display: flex; justify-content: center; position: relative; line-height: 8px; }
.launch { position: absolute; right: 5px; top: 0; }
.big { display: flex; flex-direction: column; align-items: center; white-space: nowrap; line-height: 13px; }
.big > span { margin-top: 3px; }
.big > span svg { display: inline-block; vertical-align: middle; margin-left: 2px; }
.big > span + svg { margin-top: 5px; }
.off { color: #9c9c9c; }
.off > span + svg { opacity: .6; }
.w40 { width: 40px; } .w44 { width: 44px; } .w48 { width: 48px; } .w52 { width: 52px; } .w54 { width: 54px; } .w56 { width: 56px; } .w68 { width: 68px; }
.stack { display: flex; flex-direction: column; gap: 5px; padding-top: 1px; }
.small { display: flex; align-items: center; gap: 5px; height: 17px; white-space: nowrap; }
.g-nav .tools { padding-left: 2px; }
.navgrid { display: grid; grid-template-columns: 16px 16px; gap: 6px; }
.marks { margin-left: 4px; }
.g-layer .tools { padding-left: 4px; }
.g-sel .tools { padding-left: 3px; }
.g-sel .stack { padding-left: 2px; }
.g-inq .tools { padding-left: 6px; gap: 2px; }
.g-lab .tools { padding-left: 8px; }
.g-lab .stack { width: 100px; }
.g-lab .small { gap: 2px; }

/* docked panes */
.dock { flex: 1; display: grid; grid-template-columns: 292px 5px minmax(0, 1fr) 5px 304px 6px 406px; padding: 6px; min-height: 0; }
.dock > :nth-child(2) { grid-column: 3; }
.dock > :nth-child(3) { grid-column: 5; }
.dock > :nth-child(4) { grid-column: 7; }
.col { display: flex; flex-direction: column; min-height: 0; }
.pane { flex: 1; min-height: 0; display: flex; flex-direction: column; background: #f7f9f8; border: 1px solid #cbcbcb; border-top-width: 5px; }
.phead { display: flex; align-items: flex-start; padding: 2px 6px 0 5px; height: 33px; }
.phead h2 { flex: 1; font-size: 15px; line-height: 16px; color: #6a6a6a; }
.phead svg { margin-left: 8px; color: #555; margin-top: 1px; }
.phead svg:nth-of-type(1) { margin-top: 7px; }
.ptabs { display: flex; height: 21px; align-items: center; color: #444; }
.ptabs a { padding: 0 5px 0 6px; line-height: 21px; }
.ptabs .on { color: #0a74c8; background: #f7f9f8; border: 1px solid #cbcbcb; border-top: 0; align-self: flex-start; height: 21px; margin-top: -1px; line-height: 22px; padding: 0 4px; }

/* create features */
.searchrow { display: flex; align-items: center; gap: 7px; padding: 0 6px 0 7px; height: 24px; }
.searchbox { flex: 1; display: flex; align-items: center; gap: 10px; height: 24px; background: #fff; border: 1px solid #919191; padding-right: 6px; }
.searchbox input { flex: 1; min-width: 0; padding-left: 8px; outline: 0; }
.searchbox input::placeholder { color: #555; font-style: italic; opacity: 1; }
.dim { opacity: .4; }
.notice { display: flex; align-items: center; height: 26px; margin-top: 3px; background: #dcedd9; padding: 0 8px 0 12px; gap: 15px; color: #444; }
.notice span { flex: 1; }
.notice > svg:last-child { color: #777; }
.listwrap { flex: 1; min-height: 0; display: flex; overflow: hidden; }
.templates { flex: 1; list-style: none; margin: 0; padding: 0; height: 0; }
.templates li { display: flex; align-items: center; height: 22px; padding-left: 18px; gap: 7px; white-space: nowrap; }
.templates .head { padding-left: 6px; gap: 4px; font-size: 13px; margin-top: 2px; color: #444; }
.templates .head:first-child { margin-top: 0; }
.sw { width: 16px; height: 16px; background: #ffb98c; margin: 0 -1px; }
.aa { width: 14px; padding-left: 5px; font: 10px/12px "Liberation Sans", sans-serif; color: #000; }
.aa.navy { background: #0a1f6b; color: #fff; border: 1px solid #111; font-weight: 700; font-size: 8px; width: 11px; padding: 0; margin-left: 3px; }
.templates .active { display: flex; flex-direction: column; align-items: stretch; gap: 0; height: 119px; margin: 8px 0; padding: 7px 6px 8px; background: #e1eff8; border: 2px solid #005e95; }
.acthead { display: flex; gap: 5px; height: 22px; align-items: center; padding-left: 15px; }
.straight { align-self: flex-start; margin: 3px 0 0 20px; height: 18px; }
.active textarea { margin-top: 10px; height: 47px; border: 1px solid #a5a7a9; background: #fff; padding: 0 2px; resize: none; }
.icoBlue { font: bold 11px "Liberation Sans", sans-serif; fill: #4f9fd6; }
.icoW { font: bold 6px "Liberation Sans", sans-serif; fill: #fff; }
.icoA { font: bold 10px "Liberation Sans", sans-serif; fill: #666; }
.icoY { font: bold 12px "Liberation Sans", sans-serif; fill: #555; }
.icoBig { font: bold 15px "Liberation Serif", serif; fill: #555; }
.icoSm { font: bold 12px "Liberation Serif", serif; fill: #444; }
.sbar { width: 12px; display: flex; flex-direction: column; align-items: center; padding: 2px 4px 2px 0; gap: 3px; }
.track { flex: 1; width: 8px; background: #e2e3e1; padding: 41px 0 24px; display: flex; }
.thumb { flex: 1; background: #a5a7a9; }

/* map view */
.mapcol { display: flex; flex-direction: column; min-width: 0; min-height: 0; }
.mtabs { display: flex; height: 22px; border-bottom: 2px solid #0078d0; color: #333; }
.mtabs a { display: flex; align-items: center; gap: 5px; padding: 3px 0 0 6px; white-space: nowrap; }
.mtabs .on { background: #0078d0; color: #fff; }
.mtabs .x { margin-left: 0; }
.m1 { width: 97px; } .m2 { width: 103px; } .m3 { width: 84px; } .m4 { width: 75px; } .m5 { width: 81px; }
.mmore { margin: 11px 5px 0 auto; }
.mapframe { flex: 1; min-height: 0; display: flex; flex-direction: column; border: 1px solid #cbcbcb; background: #fff; }
.canvas { flex: 1; min-height: 0; position: relative; overflow: hidden; }
.map { width: 100%; height: 100%; }
.street { font-family: "Liberation Sans", sans-serif; fill: #000; }
.anno { font: bold 94px "Liberation Sans", sans-serif; fill: #000; fill-opacity: .89; stroke: #3ff; stroke-width: 3px; paint-order: stroke; }
.anno .wide { font-size: 97px; }
.anno .plain { stroke: none; }
.anno .ghost { fill: none; }
.edittools { position: absolute; left: 50%; bottom: 12px; transform: translateX(-50%); display: flex; align-items: center; gap: 5px; height: 52px; padding: 0 6px; background: #f7f9f8; border: 2px solid #cbcbcb; }
.et { width: 34px; height: 34px; display: grid; place-items: center; }
.sel-on { background: #e1effa; border: 1px solid #0078d0; }
.etsep { width: 2px; align-self: stretch; background: #cbcbcb; margin-right: 3px; }
.gear { position: absolute; right: -10px; bottom: -6px; }
.status { display: flex; align-items: center; height: 24px; background: #f7f9f8; padding: 0 5px; color: #222; }
.status .bar { height: 15px; margin: 0 4px; }
.sel { position: relative; display: block; flex: none; border: 1px solid #a9abad; background: #fff; height: 22px; }
.sel select { appearance: none; width: 100%; height: 100%; padding: 0 5px; outline: 0; color: #111; display: block; }
.sel.sym select { padding: 0 2px; }
.sel::after { content: ""; position: absolute; right: 4px; top: 50%; margin-top: -2px; border: 3px solid transparent; border-top: 4px solid #666; border-bottom: 0; pointer-events: none; }
.scale { width: 100px; }
.sb { width: 20px; height: 20px; display: grid; place-items: center; margin: 0 1px; }
.sb.on { background: #aad9fa; }
.coords { flex: 1; text-align: center; color: #111; }
.selcount { display: flex; align-items: center; gap: 2px; background: #fff; padding: 0 1px; height: 20px; color: #444; }
.refresh { margin-left: 1px; }

/* modify features */
.toolhead { display: grid; grid-template-columns: 18px 1fr; height: 22px; padding: 0 6px; align-items: center; color: #5c5c5c; }
.toolhead h3 { text-align: center; font-size: 14px; line-height: 22px; margin-right: 18px; }
.subtabs { display: flex; font-size: 12px; line-height: 16px; margin-top: 15px; padding-left: 1px; color: #5c5c5c; }
.subtabs a { padding: 0 8px; }
.subtabs a + a { border-left: 1px solid #a8a8a8; }
.subtabs .on { color: #0079c1; font-weight: 700; }
.chsel { display: flex; align-items: center; gap: 9px; margin: 16px 0 0 17px; height: 26px; text-align: left; }
.chsel.top { margin-top: 6px; }
.tr { display: flex; align-items: center; gap: 7px; height: 17px; padding-left: 8px; white-space: nowrap; }
.treebox { height: 130px; margin: 9px 5px 10px; border: 1px solid #dcdedd; background: #fbfcfb; flex: none; }
.tr.sub { padding-left: 40px; }
.treebox .tr:first-child { padding-left: 7px; }
.editv { display: flex; align-items: center; gap: 10px; margin: 0 5px; padding-left: 8px; height: 34px; background: #d1e8f8; border: 1px solid #0078c8; flex: none; }
.split { height: 10px; background: #e4e5e6; flex: none; }
.vsplit { margin-top: 237px; }
.vtools { display: flex; align-items: center; height: 29px; padding-left: 7px; gap: 10px; flex: none; }
.vtools .bar { height: 22px; }
.vtools .bar + button { margin-left: -5px; }
.verts { width: 100%; border-collapse: collapse; table-layout: fixed; background: #fff; }
.verts th { text-align: left; font-weight: 400; height: 15px; line-height: 15px; padding: 0; background: #e3e5e5; }
.verts .c0 { width: 14px; } .verts .c1 { width: 29px; padding-left: 6px; }
.verts th:nth-child(n+3) { text-indent: -3px; }
.verts td { height: 24px; padding: 0; line-height: 16px; }
.verts tbody tr { background: #dfdfde; }
.verts tbody .part { background: #fff; }
.part td:first-child svg { margin-left: 1px; }
.verts .n { text-align: right; padding-right: 13px; }
.vrest { flex: 1; background: #fff; }

/* attributes */
.tree { margin-top: 10px; }
.leaf { padding-left: 29px; gap: 6px; }
.leaf span { flex: 1; background: #e1effa; line-height: 15px; padding-left: 1px; margin-right: 2px; }
.asplit { margin-top: 250px; }
.subtabs.low { margin-top: 10px; padding-left: 0; }
.annoedit { flex: 1; min-height: 0; display: flex; justify-content: space-between; }
.form { padding: 12px 0 0 10px; width: 332px; color: #111; }
.row { display: flex; align-items: center; }
.r1 { gap: 5px; }
.sym { width: 200px; height: 24px; background: #fcfdfc; }
.btn { width: 70px; height: 24px; border: 1px solid #b8baba; color: #ccc; background: #f9fbfa; }
.r2 { margin: 10px 0 0 1px; height: 17px; gap: 12px; }
.r2 .bar { height: 17px; margin: 0 -5px 0 -5px; }
.ab, .vb { height: 16px; }
.ab.on, .vb.on { background: #d1e8f8; }
.vb { margin-right: -2px; }
.annotext { display: block; width: 321px; height: 150px; margin-top: 15px; border: 2px solid #c8c8c8; background: #fff; padding: 2px 4px; resize: none; }
.fontbox { width: 319px; height: 86px; margin: 11px 0 0 1px; border: 1px solid #d4d6d6; border-radius: 3px; padding: 16px 10px; display: flex; flex-direction: column; gap: 10px; }
.fam { width: 150px; margin-right: 2px; }
.size { width: 40px; }
.fz.first { margin: 0 12px 0 13px; }
.color { display: flex; align-items: center; gap: 4px; width: 40px; height: 22px; border: 1px solid #a9abad; padding-left: 2px; margin: 0 12px 0 2px; }
.color i { width: 22px; height: 16px; background: #000; border: 1px solid #888; }
.fontbox input { width: 50px; height: 22px; border: 1px solid #a9abad; background: #fff; padding: 0 4px; margin-left: auto; }
.ghostbar { display: flex; flex-direction: column; justify-content: space-between; padding: 9px 2px 16px 0; }
.actions { display: flex; justify-content: flex-end; gap: 15px; padding: 0 5px 14px 0; }
```
